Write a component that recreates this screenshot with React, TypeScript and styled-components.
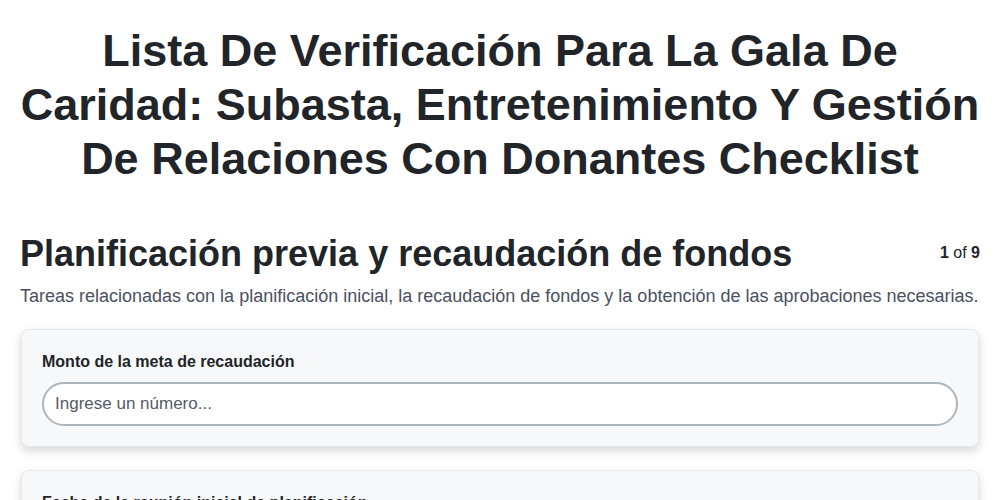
import React from "react";
import styled, { createGlobalStyle } from "styled-components";

const Global = createGlobalStyle`
  html, body { margin: 0; padding: 0; background: #ffffff; }
  body { font-family: "Liberation Sans", Arial, sans-serif; color: #212529; }
  * { box-sizing: border-box; }
`;

const Page = styled.main`
  padding: 24px 20px 0 20px;
`;

const Title = styled.h1`
  margin: 0 0 48px 0;
  text-align: center;
  font-size: 45px;
  line-height: 54px;
  font-weight: 700;
  color: #212529;
`;

const SectionHeader = styled.div`
  display: flex;
  align-items: flex-start;
  justify-content: space-between;
`;

const SectionTitle = styled.h2`
  margin: 0;
  font-size: 36px;
  line-height: 40px;
  font-weight: 700;
  color: #212529;
`;

const Counter = styled.div`
  font-size: 16px;
  line-height: 20px;
  padding-top: 9px;
  color: #212529;
  b { font-weight: 700; }
`;

const Description = styled.p`
  margin: 10px 0 21px 0;
  font-size: 18px;
  line-height: 24px;
  color: #4a5160;
`;

const Cards = styled.div`
  display: flex;
  flex-direction: column;
  gap: 23px;
`;

const Card = styled.section`
  margin: 0 1px;
  background: #f7f8fa;
  border: 1px solid #e6e7eb;
  border-radius: 8px;
  box-shadow: 0 4px 10px rgba(0, 0, 0, 0.16);
  padding: 22px 20px 20px 20px;
`;

const Label = styled.label`
  display: block;
  font-size: 16px;
  line-height: 20px;
  font-weight: 700;
  color: #212529;
  margin-bottom: 10px;
`;

const Input = styled.input`
  display: block;
  width: 100%;
  height: 44px;
  border: 2px solid #adb5bd;
  border-radius: 22px;
  background: #ffffff;
  padding: 0 11px;
  font-family: "Liberation Sans", Arial, sans-serif;
  font-size: 17px;
  color: #212529;
  outline: none;
  &::placeholder { color: #555b66; }
`;

export default function App() {
  return (
    <>
      <Global />
      <Page>
        <Title>
          Lista De Verificación Para La Gala De Caridad: Subasta, Entretenimiento Y Gestión De Relaciones Con Donantes Checklist
        </Title>
        <SectionHeader>
          <SectionTitle>Planificación previa y recaudación de fondos</SectionTitle>
          <Counter>
            <b>1</b> of <b>9</b>
          </Counter>
        </SectionHeader>
        <Description>
          Tareas relacionadas con la planificación inicial, la recaudación de fondos y la obtención de las aprobaciones necesarias.
        </Description>
        <Cards>
          <Card>
            <Label>Monto de la meta de recaudación</Label>
            <Input type="text" placeholder="Ingrese un número..." />
          </Card>
          <Card>
            <Label>Fecha de la reunión inicial de planificación</Label>
            <Input type="text" placeholder="dd/mm/aaaa" />
          </Card>
        </Cards>
      </Page>
    </>
  );
}
